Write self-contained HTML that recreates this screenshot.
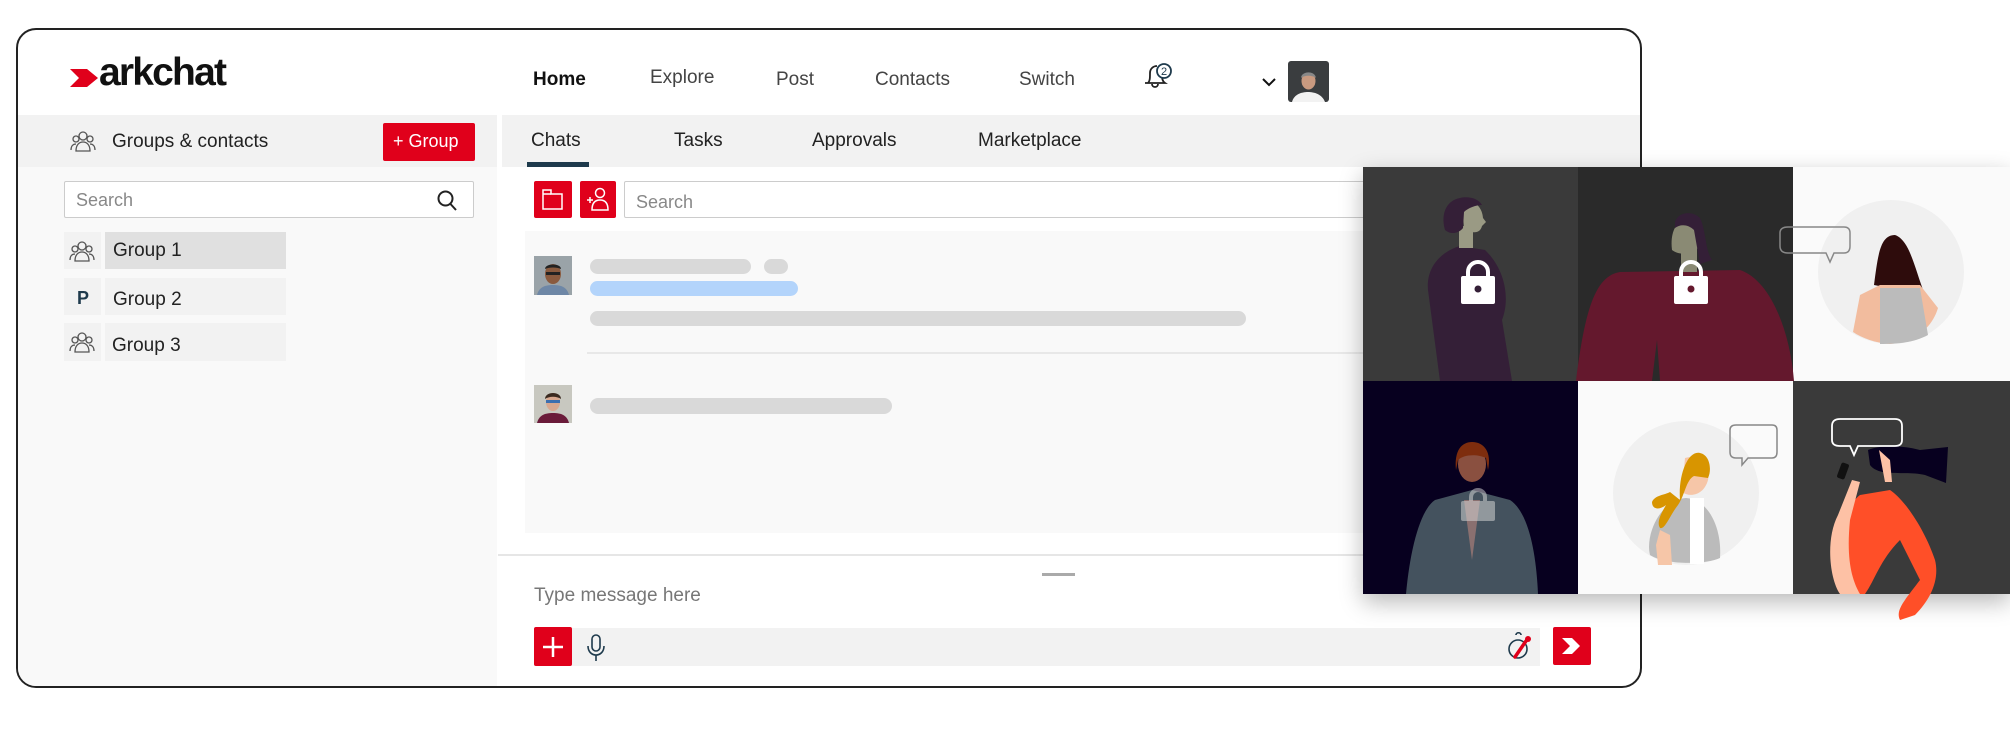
<!DOCTYPE html>
<html><head><meta charset="utf-8">
<style>
*{margin:0;padding:0;box-sizing:border-box}
body{width:2010px;height:730px;background:#fff;position:relative;overflow:hidden;font-family:"Liberation Sans",sans-serif;color:#222}
.a{position:absolute}
.frame{left:16px;top:28px;width:1626px;height:660px;border:2px solid #222;border-radius:20px;overflow:hidden;background:#fff}
.nav{font-size:19px;color:#444;top:69px}
.red{background:#e0001b}
.bar{background:#d9d9d9;border-radius:8px}
</style></head><body>
<div class="a frame">
  <div class="a" style="left:0;top:85px;width:479px;height:52px;background:#f2f2f2"></div>
  <div class="a" style="left:0;top:137px;width:479px;height:530px;background:#f9f9f9"></div>
  <div class="a" style="left:484px;top:85px;width:1150px;height:52px;background:#f2f2f2"></div>
</div>
<!-- logo -->
<svg class="a" style="left:70px;top:69px" width="28" height="18" viewBox="0 0 28 18"><path d="M0 0H17L28 9L17 18H0L9 9Z" fill="#e0001b"/></svg>
<div class="a" style="left:99px;top:51px;font-size:39px;font-weight:bold;letter-spacing:-1.8px;color:#111">arkchat</div>
<!-- top nav -->
<div class="a nav" style="left:533px;font-weight:bold;color:#111">Home</div>
<div class="a nav" style="left:650px;top:67px">Explore</div>
<div class="a nav" style="left:776px">Post</div>
<div class="a nav" style="left:875px">Contacts</div>
<div class="a nav" style="left:1019px">Switch</div>
<svg class="a" style="left:1140px;top:59px" width="36" height="36" viewBox="0 0 36 36"><path d="M8 24c2-2 2-5 2-10 0-4 3-7 7-7M22 14c0 5 0 8 3 10H5M12 25c0 4 6 4 6 0" fill="none" stroke="#222" stroke-width="1.8"/><circle cx="24" cy="12" r="7" fill="#fff" stroke="#1e3a4c" stroke-width="1.8"/><text x="24" y="16" font-size="11" text-anchor="middle" fill="#1e3a4c" font-family="Liberation Sans">2</text></svg>
<svg class="a" style="left:1262px;top:77px" width="14" height="10" viewBox="0 0 14 10"><path d="M1 2L7 8L13 2" fill="none" stroke="#111" stroke-width="2"/></svg>
<svg class="a" style="left:1288px;top:61px" width="41" height="41" viewBox="0 0 41 41"><rect width="41" height="41" rx="3" fill="#3a3d3f"/><path d="M4 41c2-8 10-10 16-10s14 2 17 10z" fill="#f2f2f2"/><ellipse cx="20.5" cy="20" rx="7" ry="8.5" fill="#c99a80"/><path d="M13 17c0-7 14-8 15 0-3-3-12-3-15 0z" fill="#888"/></svg>
<!-- sidebar header -->
<svg class="a" style="left:70px;top:130px" width="26" height="22" viewBox="0 0 26 22"><g fill="none" stroke="#555" stroke-width="1.3"><circle cx="13" cy="6" r="4"/><circle cx="6" cy="9" r="3"/><circle cx="20" cy="9" r="3"/><path d="M6 21c0-6 3-9 7-9s7 3 7 9zM1 20c0-4 2-6 5-6M25 20c0-4-2-6-5-6"/></g></svg>
<div class="a" style="left:112px;top:131px;font-size:19px;color:#222">Groups &amp; contacts</div>
<div class="a red" style="left:383px;top:123px;width:92px;height:38px;border-radius:2px;color:#fff;font-size:18px;line-height:36px;padding-left:10px">+ Group</div>
<!-- sidebar search -->
<div class="a" style="left:64px;top:181px;width:410px;height:37px;border:1.5px solid #ccc;border-radius:2px;background:#fff"></div>
<div class="a" style="left:76px;top:190px;font-size:18px;color:#888">Search</div>
<svg class="a" style="left:437px;top:190px" width="20" height="22" viewBox="0 0 20 22"><circle cx="8.5" cy="8.5" r="7" fill="none" stroke="#222" stroke-width="2"/><path d="M13.5 14L19 20" stroke="#222" stroke-width="2"/></svg>
<!-- groups -->
<div class="a" style="left:64px;top:232px;width:37px;height:37px;background:#f2f2f2"></div>
<div class="a" style="left:105px;top:232px;width:181px;height:37px;background:#e0e0e0"></div>
<div class="a" style="left:64px;top:278px;width:37px;height:37px;background:#f2f2f2"></div>
<div class="a" style="left:105px;top:278px;width:181px;height:37px;background:#f2f2f2"></div>
<div class="a" style="left:64px;top:323px;width:37px;height:38px;background:#f2f2f2"></div>
<div class="a" style="left:105px;top:323px;width:181px;height:38px;background:#f2f2f2"></div>
<svg class="a" style="left:69px;top:240px" width="26" height="22" viewBox="0 0 26 22"><g fill="none" stroke="#555" stroke-width="1.3"><circle cx="13" cy="6" r="4"/><circle cx="6" cy="9" r="3"/><circle cx="20" cy="9" r="3"/><path d="M6 21c0-6 3-9 7-9s7 3 7 9zM1 20c0-4 2-6 5-6M25 20c0-4-2-6-5-6"/></g></svg>
<div class="a" style="left:77px;top:288px;font-size:18px;font-weight:bold;color:#1e3a4c">P</div>
<svg class="a" style="left:69px;top:331px" width="26" height="22" viewBox="0 0 26 22"><g fill="none" stroke="#555" stroke-width="1.3"><circle cx="13" cy="6" r="4"/><circle cx="6" cy="9" r="3"/><circle cx="20" cy="9" r="3"/><path d="M6 21c0-6 3-9 7-9s7 3 7 9zM1 20c0-4 2-6 5-6M25 20c0-4-2-6-5-6"/></g></svg>
<div class="a" style="left:113px;top:240px;font-size:19px">Group 1</div>
<div class="a" style="left:113px;top:289px;font-size:19px">Group 2</div>
<div class="a" style="left:112px;top:335px;font-size:19px">Group 3</div>
<!-- tabs -->
<div class="a" style="left:531px;top:130px;font-size:19px">Chats</div>
<div class="a" style="left:527px;top:162px;width:62px;height:5px;background:#1e3a4c"></div>
<div class="a" style="left:674px;top:130px;font-size:19px">Tasks</div>
<div class="a" style="left:812px;top:130px;font-size:19px">Approvals</div>
<div class="a" style="left:978px;top:130px;font-size:19px">Marketplace</div>
<!-- toolbar -->
<div class="a red" style="left:534px;top:181px;width:38px;height:37px;border-radius:2px"></div>
<svg class="a" style="left:541px;top:188px" width="24" height="24" viewBox="0 0 24 24"><path d="M2 2H10V6H21V21H2Z" fill="none" stroke="#fff" stroke-width="1.5"/><path d="M2 6H10" stroke="#fff" stroke-width="1.5"/></svg>
<div class="a red" style="left:580px;top:181px;width:36px;height:37px;border-radius:2px"></div>
<svg class="a" style="left:584px;top:185px" width="28" height="28" viewBox="0 0 28 28"><g fill="none" stroke="#fff" stroke-width="1.5"><circle cx="16" cy="8" r="4.5"/><path d="M8 25c0-7 3-10 8-10s8 3 8 10z"/><path d="M3 15h6M6 12v6"/></g></svg>
<div class="a" style="left:624px;top:181px;width:900px;height:37px;border:1.5px solid #ccc;border-radius:2px;background:#fff"></div>
<div class="a" style="left:636px;top:192px;font-size:18px;color:#888">Search</div>
<!-- messages -->
<div class="a" style="left:525px;top:231px;width:1110px;height:302px;background:#f9f9f9"></div>
<svg class="a" style="left:534px;top:256px" width="38" height="39" viewBox="0 0 38 39"><rect width="38" height="39" fill="#9aa3a8"/><path d="M3 39c2-8 8-10 16-10s14 2 16 10z" fill="#6e87a6"/><ellipse cx="19" cy="18" rx="8" ry="10" fill="#8a5a3e"/><path d="M11 13c0-6 16-6 16 0-4-2-12-2-16 0z" fill="#222"/><rect x="12" y="16" width="14" height="3" fill="#222"/></svg>
<div class="a bar" style="left:590px;top:259px;width:161px;height:15px"></div>
<div class="a bar" style="left:764px;top:259px;width:24px;height:15px"></div>
<div class="a" style="left:590px;top:281px;width:208px;height:15px;background:#b3d4fb;border-radius:8px"></div>
<div class="a bar" style="left:590px;top:311px;width:656px;height:15px"></div>
<div class="a" style="left:587px;top:352px;width:1050px;height:2px;background:#e8e8e8"></div>
<svg class="a" style="left:534px;top:385px" width="38" height="38" viewBox="0 0 38 38"><rect width="38" height="38" fill="#c8c8c0"/><path d="M3 38c2-8 8-10 16-10s14 2 16 10z" fill="#6a1b3a"/><ellipse cx="19" cy="17" rx="7" ry="9" fill="#d8a890"/><path d="M11 14c0-8 16-8 16 0-4-3-12-3-16 0z" fill="#3a2a20"/><rect x="12" y="15" width="14" height="3" fill="#3c6fb0"/></svg>
<div class="a bar" style="left:590px;top:398px;width:302px;height:16px"></div>
<!-- composer -->
<div class="a" style="left:498px;top:554px;width:1142px;height:2px;background:#e6e6e6"></div>
<div class="a" style="left:1042px;top:573px;width:33px;height:3px;background:#aaa"></div>
<div class="a" style="left:534px;top:585px;font-size:19px;color:#777">Type message here</div>
<div class="a" style="left:534px;top:628px;width:1006px;height:38px;background:#f2f2f2"></div>
<div class="a red" style="left:534px;top:627px;width:38px;height:39px;border-radius:2px"></div>
<svg class="a" style="left:541px;top:635px" width="24" height="24" viewBox="0 0 24 24"><path d="M12 2V22M2 12H22" stroke="#fff" stroke-width="2.5"/></svg>
<svg class="a" style="left:585px;top:633px" width="22" height="30" viewBox="0 0 22 30"><g fill="none" stroke="#1e3a4c" stroke-width="1.6"><rect x="7" y="2" width="8" height="16" rx="4"/><path d="M3 13c0 6 4 9 8 9s8-3 8-9M11 22v6"/></g></svg>
<svg class="a" style="left:1506px;top:629px" width="28" height="34" viewBox="0 0 28 34"><circle cx="12" cy="20" r="9" fill="none" stroke="#1e3a4c" stroke-width="1.6"/><path d="M10 6c0-3 5-3 5 0" fill="none" stroke="#1e3a4c" stroke-width="1.6"/><path d="M9 28L20 12" stroke="#e0001b" stroke-width="3.5" stroke-linecap="round"/><circle cx="22" cy="10" r="3" fill="#e0001b"/></svg>
<div class="a red" style="left:1553px;top:627px;width:38px;height:38px;border-radius:2px"></div>
<svg class="a" style="left:1560px;top:636px" width="24" height="20" viewBox="0 0 24 20"><path d="M2 2H12L20 10L12 18H2L10 10Z" fill="#fff"/></svg>
<!-- video grid -->
<div class="a" style="left:1363px;top:167px;width:647px;height:427px;box-shadow:0 8px 22px rgba(0,0,0,0.28)"></div>
<svg class="a" style="left:1360px;top:160px" width="650" height="470" viewBox="0 0 650 470">
<rect x="3" y="7" width="215" height="214" fill="#3a3a3a"/>
<rect x="218" y="7" width="215" height="214" fill="#2a2a2a"/>
<rect x="433" y="7" width="217" height="214" fill="#fafafa"/>
<rect x="3" y="221" width="215" height="213" fill="#07001f"/>
<rect x="218" y="221" width="215" height="213" fill="#fafafa"/>
<rect x="433" y="221" width="217" height="213" fill="#3a3a3a"/>
<path d="M100 86C80 92 66 108 68 130L80 221H152L142 160C150 140 146 110 125 90Z" fill="#341f37"/>
<rect x="99" y="66" width="14" height="22" fill="#9a9a84"/>
<path d="M102 44C110 38 122 44 123 58L126 62L122 66C120 74 112 74 104 68Z" fill="#9a9a84"/>
<path d="M100 38C88 40 80 52 85 70C92 76 100 72 103 68L104 52C108 48 116 45 122 45C118 38 108 36 100 38Z" fill="#341f37"/>
<path d="M260 112C235 116 225 150 216 221H292L297 180L300 221H434C430 170 410 120 380 110Z" fill="#64182d"/>
<rect x="321" y="88" width="16" height="24" fill="#8a8a74"/>
<path d="M325 60C315 62 310 74 312 90C320 96 330 94 338 88L340 64Z" fill="#8a8a74"/>
<path d="M315 62C318 52 332 50 340 58C346 70 345 90 352 100L340 104L334 70C328 64 320 64 315 68Z" fill="#341f37"/>
<g fill="#fff"><path d="M108 118v-6a10 10 0 0 1 20 0v6" fill="none" stroke="#fff" stroke-width="4"/><rect x="101" y="116" width="34" height="28" rx="2"/><circle cx="118" cy="129" r="3.5" fill="#341f37"/></g>
<g fill="#fff"><path d="M321 118v-6a10 10 0 0 1 20 0v6" fill="none" stroke="#fff" stroke-width="4"/><rect x="314" y="116" width="34" height="28" rx="2"/><circle cx="331" cy="129" r="3.5" fill="#64182d"/></g>
<ellipse cx="531" cy="112" rx="73" ry="72" fill="#f0f0f0"/>
<path d="M535 75C520 75 518 95 514 125L565 135C555 110 550 80 535 75Z" fill="#2e0c0c"/>
<path d="M500 135L520 125L560 125L578 148C572 168 555 182 530 184C515 183 502 178 493 172Z" fill="#f2bc9e"/>
<path d="M520 128L560 128L568 175C555 182 540 184 520 184Z" fill="#bbb"/>
<path d="M428 67H484Q490 67 490 73V86Q490 93 484 93H474L470 102L466 93H428Q420 93 420 86V73Q420 67 428 67Z" fill="none" stroke="#888" stroke-width="1.5"/>
<path d="M75 340C60 350 50 390 46 434H178C176 390 168 352 150 340L112 330Z" fill="#44525e"/>
<path d="M104 340L112 400L120 340Z" fill="#8a7070"/>
<ellipse cx="112" cy="304" rx="14" ry="18" fill="#8a5040"/>
<path d="M96 310C94 290 102 282 112 282C124 282 132 292 128 310L126 298C118 294 104 294 98 300Z" fill="#7e2d0e"/>
<g opacity="0.5"><path d="M111 343v-6a7 7 0 0 1 14 0v6" fill="none" stroke="#ddd" stroke-width="4"/><rect x="101" y="341" width="34" height="20" rx="2" fill="#ddd"/></g>
<ellipse cx="326" cy="333" rx="73" ry="72" fill="#f0f0f0"/>
<path d="M290 395C285 375 300 340 326 338C350 340 362 370 360 398C345 405 305 405 290 395Z" fill="#bbb"/>
<rect x="330" y="338" width="14" height="66" fill="#fff"/>
<path d="M296 385L300 370L310 375L312 405L298 405Z" fill="#f6c6a8"/>
<path d="M325 298C332 295 352 300 348 320C344 335 330 338 322 332Z" fill="#f6c6a8"/>
<path d="M320 340C318 315 328 290 340 293C350 295 352 310 348 318L334 316C326 320 325 335 318 345C310 355 305 370 300 368C296 362 302 352 306 345C300 350 292 350 292 342C295 335 305 335 310 332Z" fill="#d89500"/>
<path d="M376 265H412Q417 265 417 270V292Q417 298 412 298H388L382 305L382 298H376Q370 298 370 292V270Q370 265 376 265Z" fill="none" stroke="#888" stroke-width="1.5"/>
<path d="M500 335C480 350 470 400 480 434L505 434C515 420 520 400 540 380L560 420C545 440 535 450 540 460L555 455C570 440 580 420 575 400C565 370 545 340 530 330Z" fill="#ff4f28"/>
<path d="M480 434C470 420 465 380 478 355L492 320L500 322L490 360C486 400 492 420 500 434Z" fill="#fdc1a5"/>
<rect x="479" y="303" width="8" height="16" rx="2" transform="rotate(20 483 311)" fill="#111"/>
<path d="M508 290C520 285 540 285 560 290L588 287L586 323L565 315C545 310 520 318 510 305Z" fill="#07001f"/>
<path d="M519 290L525 322L532 322L530 300Z" fill="#fdc1a5"/>
<path d="M480 259H535Q542 259 542 266V280Q542 286 535 286H498L494 295L490 286H480Q472 286 472 280V266Q472 259 480 259Z" fill="none" stroke="#fff" stroke-width="1.8"/>
</svg>
</body></html>
